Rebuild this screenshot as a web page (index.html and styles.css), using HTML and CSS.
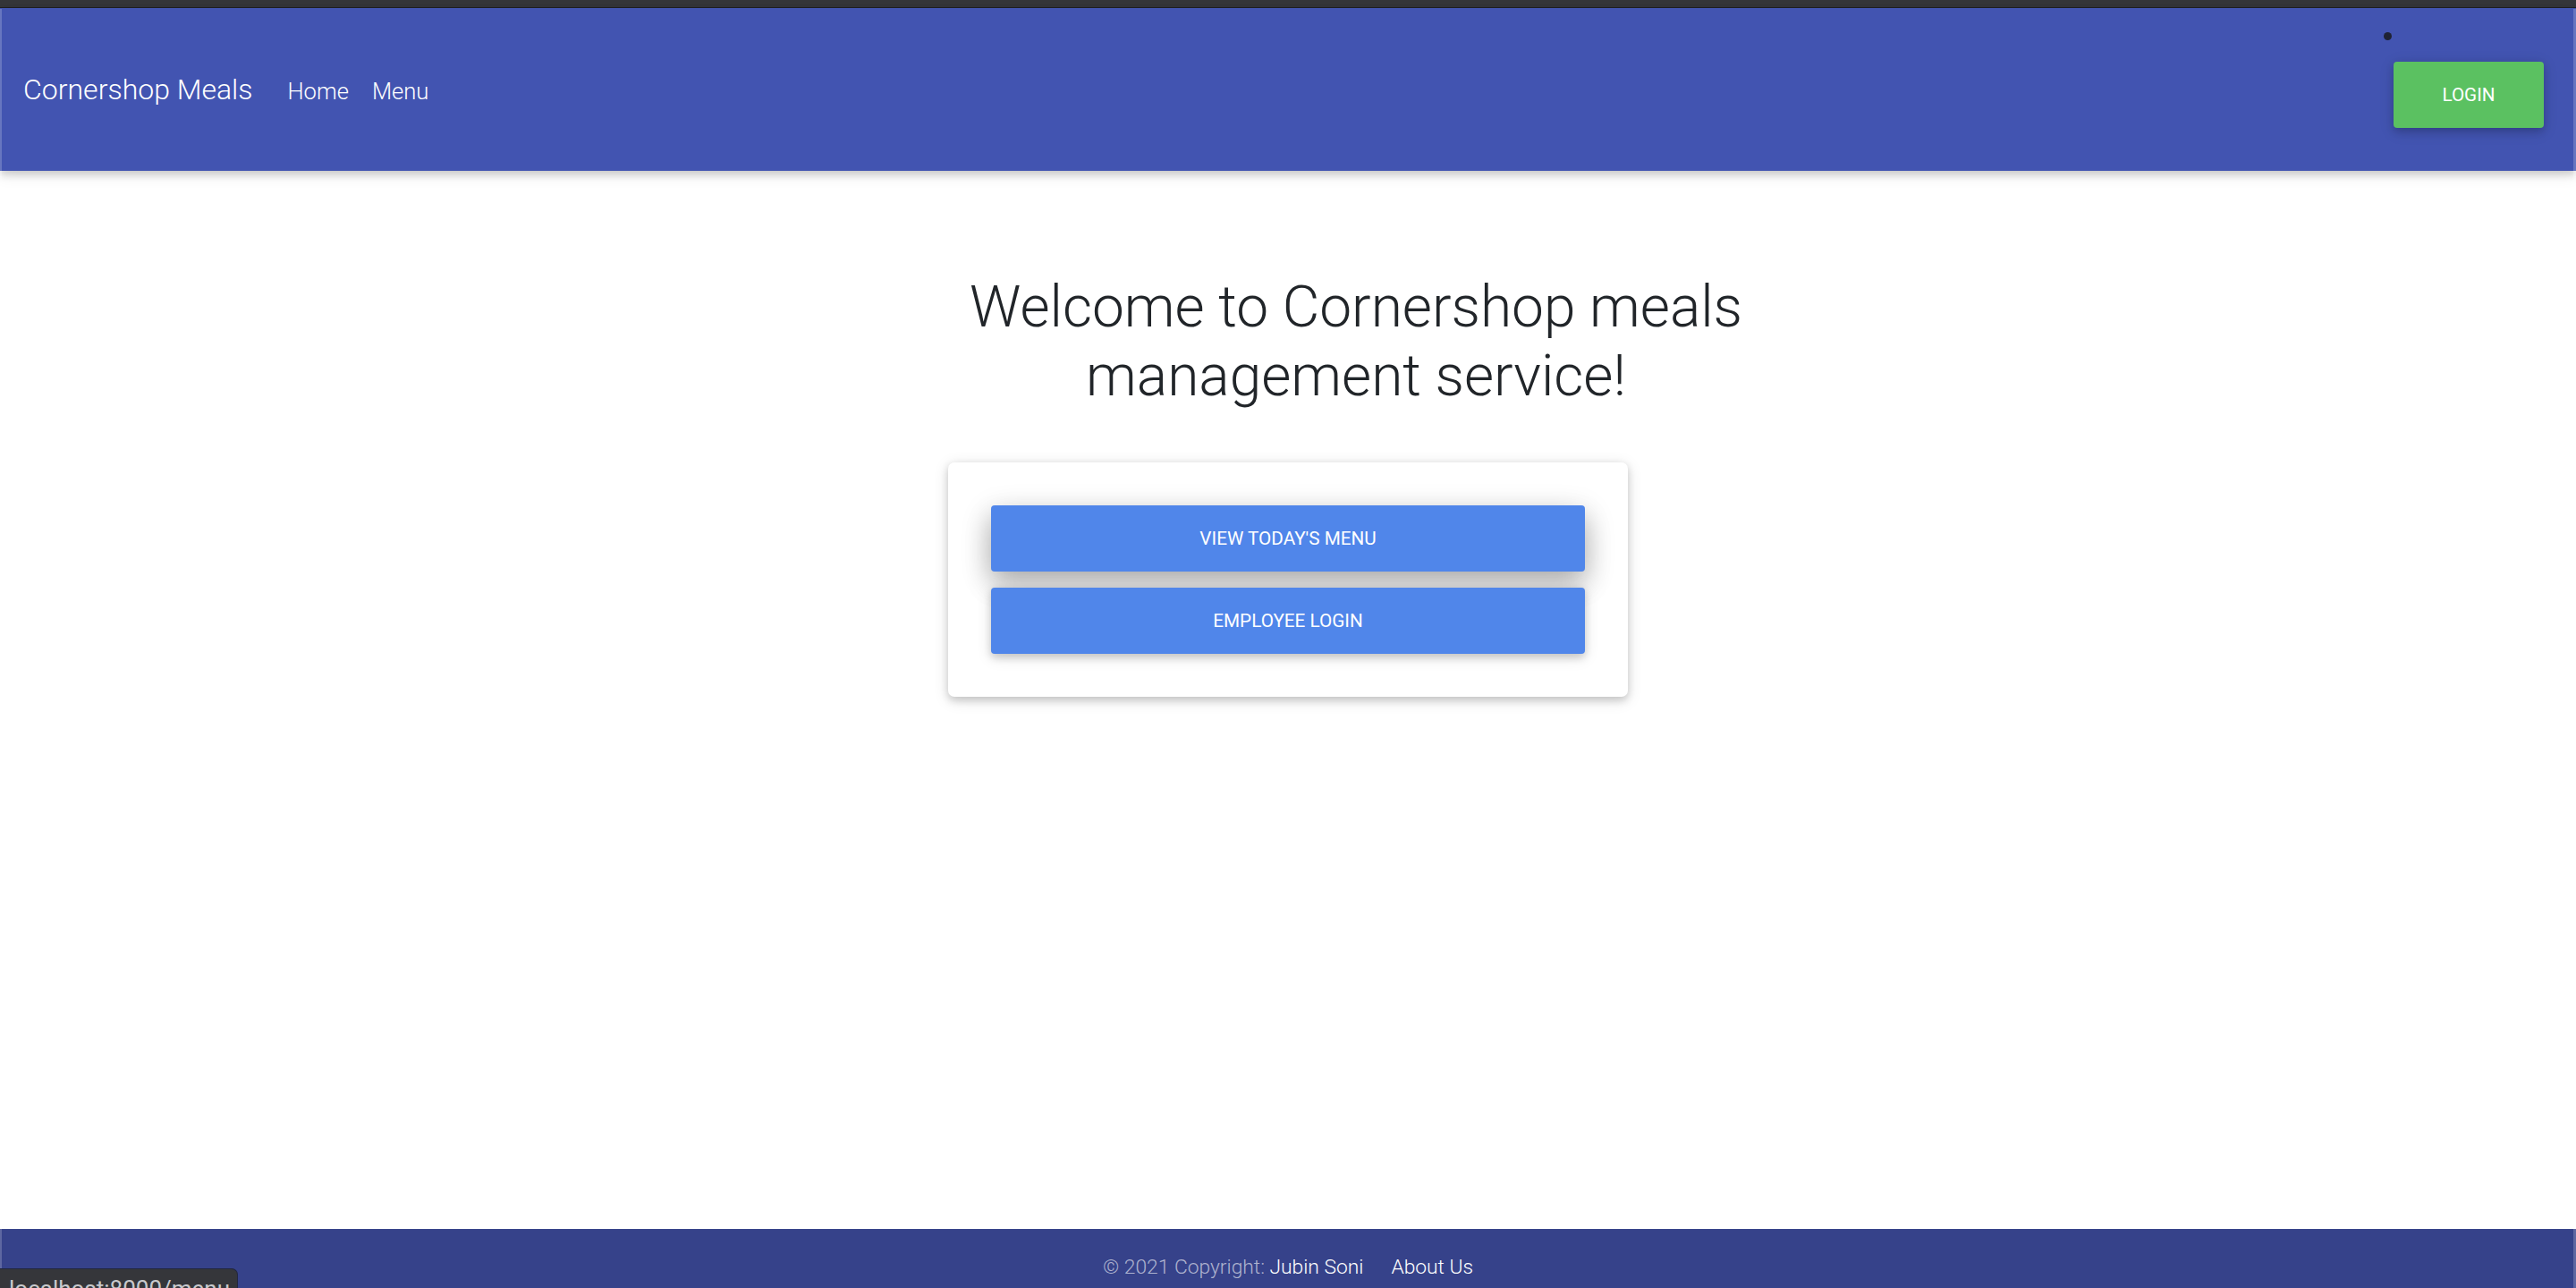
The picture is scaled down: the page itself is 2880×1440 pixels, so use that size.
FILE: index.html
```html
<!DOCTYPE html>
<html lang="en">
<head>
<meta charset="utf-8">
<title>Cornershop Meals</title>
<link rel="stylesheet" href="styles.css">
</head>
<body>
<div class="chrome-strip"></div>
<header class="navbar">
  <a class="brand" href="#">Cornershop Meals</a>
  <nav class="nav">
    <a class="nav-link" href="#">Home</a>
    <a class="nav-link" href="#">Menu</a>
  </nav>
  <span class="dot"></span>
  <button class="btn btn-login">Login</button>
</header>
<main class="hero">
  <h1 class="title">Welcome to Cornershop meals management service!</h1>
  <div class="card">
    <button class="btn btn-primary btn-raised">View Today's Menu</button>
    <button class="btn btn-primary">Employee Login</button>
  </div>
</main>
<footer class="footer">
  <span class="copy">© 2021 Copyright: <a class="footer-link" href="#">Jubin Soni</a></span>
  <a class="footer-link about" href="#">About Us</a>
</footer>
<div class="status-bubble">localhost:8000/menu</div>
<div class="edge edge-left"></div>
<div class="edge edge-right"></div>
</body>
</html>
```
FILE: styles.css
```css
* { box-sizing: border-box; }
html, body { height: 100%; }
body {
  margin: 0;
  font-family: Roboto, "Noto Sans", Arial, sans-serif;
  font-weight: 300;
  color: #212529;
  background: #fff;
  display: flex;
  flex-direction: column;
  min-height: 100vh;
  overflow: hidden;
}
a { text-decoration: none; color: inherit; }

.chrome-strip {
  height: 9px;
  background: #35363a;
  border-bottom: 1px solid #202124;
  flex: none;
}

.navbar {
  position: relative;
  z-index: 2;
  flex: none;
  height: 182px;
  background: #4254b1;
  display: flex;
  align-items: center;
  padding: 0 36px 0 26px;
  box-shadow: 0 3.5px 9px 0 rgba(0,0,0,.16), 0 3.5px 17.5px 0 rgba(0,0,0,.12);
}
.brand {
  color: #fff;
  font-size: 32px;
  font-weight: 300;
  margin-right: 26px;
}
.nav { display: flex; gap: 26px; }
.nav-link {
  color: #fff;
  font-size: 25.6px;
  font-weight: 300;
  margin-top: 4px;
}
.nav-link:first-child { margin-left: 13px; }
.dot {
  position: absolute;
  left: 2665px;
  top: 27px;
  width: 9px;
  height: 9px;
  border-radius: 50%;
  background: #1f2233;
}

.btn {
  border: 0;
  font-family: inherit;
  text-transform: uppercase;
  color: #fff;
  font-weight: 400;
  font-size: 20.7px;
  cursor: pointer;
}
.btn-login {
  margin-left: auto;
  margin-top: 12px;
  width: 168px;
  height: 74px;
  background: #5bc161;
  border-radius: 4px;
  box-shadow: 0 3.5px 9px 0 rgba(0,0,0,.16), 0 3.5px 17.5px 0 rgba(0,0,0,.12);
}

.hero {
  flex: 1;
  display: flex;
  flex-direction: column;
  align-items: center;
  padding-top: 115px;
}
.title {
  margin: 0 0 57px 152px;
  width: 1000px;
  text-align: center;
  font-size: 64px;
  font-weight: 300;
  line-height: 1.2;
  color: #212529;
}
.card {
  width: 760px;
  padding: 48px;
  display: flex;
  flex-direction: column;
  gap: 18px;
  background: #fff;
  border-radius: 7px;
  box-shadow: 0 3.5px 9px 0 rgba(0,0,0,.16), 0 3.5px 17.5px 0 rgba(0,0,0,.12);
}
.btn-primary {
  height: 74px;
  width: 100%;
  background: #5086ea;
  border-radius: 4px;
  box-shadow: 0 3.5px 9px 0 rgba(0,0,0,.16), 0 3.5px 17.5px 0 rgba(0,0,0,.12);
}
.btn-raised {
  box-shadow: 0 14px 30px 0 rgba(0,0,0,.2), 0 10px 35px 0 rgba(0,0,0,.19);
}

.footer {
  flex: none;
  height: 66px;
  background: #36428a;
  display: flex;
  justify-content: center;
  align-items: flex-start;
  padding-top: 26px;
  font-size: 22.8px;
  line-height: 1.5;
  font-weight: 300;
}
.copy { color: rgba(255,255,255,.6); }
.footer-link { color: #fff; }
.about { margin-left: 31px; }

.status-bubble {
  position: fixed;
  left: 0;
  bottom: 0;
  width: 266px;
  height: 22px;
  padding: 7px 0 0 10px;
  background: #35363a;
  border: 1px solid #22273f;
  border-left: 0;
  border-bottom: 0;
  border-top-right-radius: 7px;
  color: #c8c9cc;
  font-size: 26px;
  font-weight: 400;
  line-height: 30px;
  overflow: hidden;
  white-space: nowrap;
  z-index: 5;
}
.edge {
  position: fixed;
  top: 10px;
  bottom: 0;
  background: rgba(255,255,255,.2);
  z-index: 4;
}
.edge-left { left: 0; width: 2px; }
.edge-right { right: 0; width: 3px; }
```
